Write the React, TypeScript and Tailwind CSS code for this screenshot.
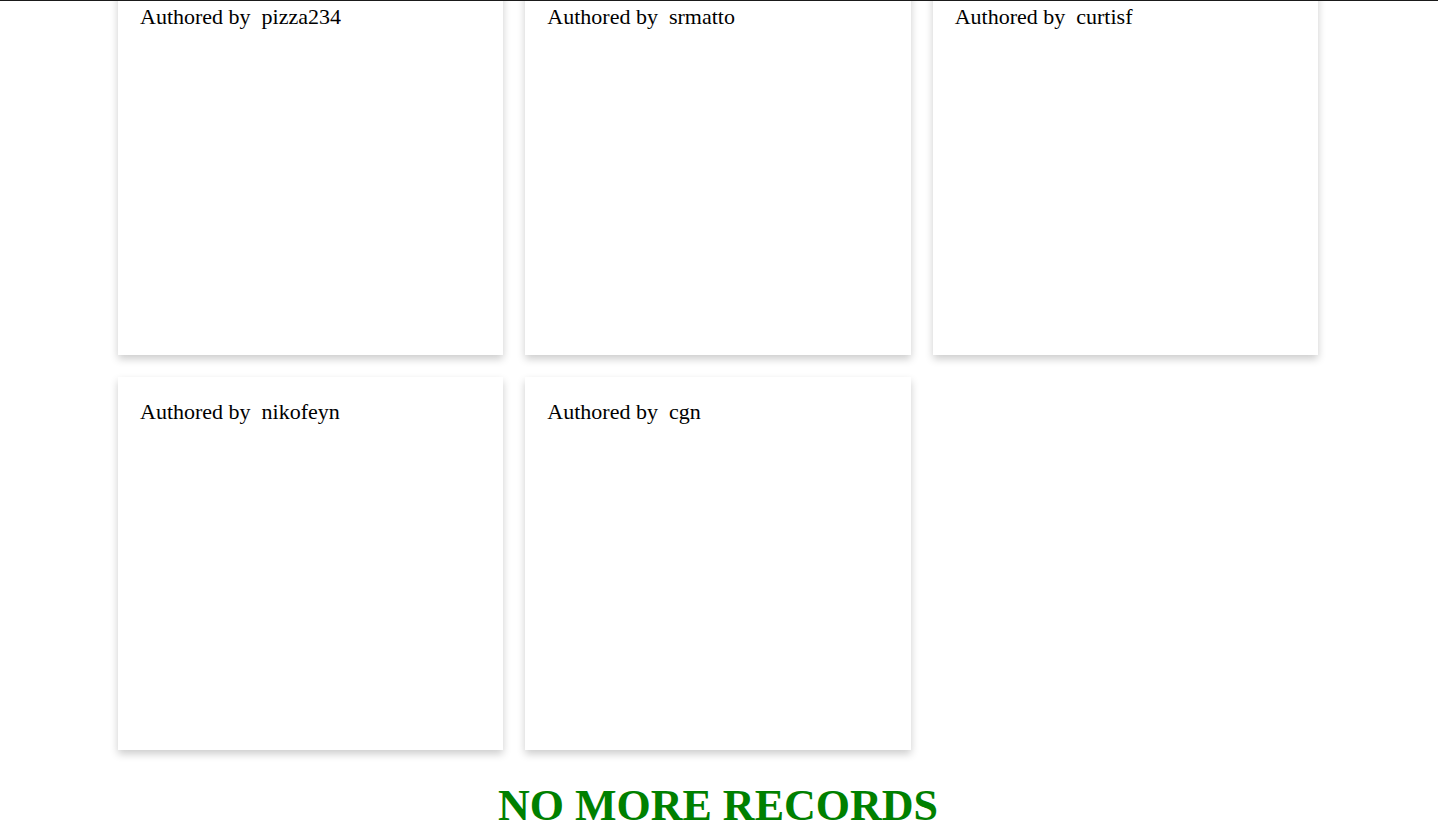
const AUTHORS = ['pizza234', 'srmatto', 'curtisf', 'nikofeyn', 'cgn']

export default function App() {
  return (
    <div className="h-[822px] overflow-hidden bg-white border-t border-[#1a1a1a]">
      <div className="-mt-[19px] w-[1200px] ml-[118px]">
        {/* Record cards */}
        <div className="grid grid-cols-3 gap-[22px]">
          {AUTHORS.map((name) => (
            <div
              key={name}
              className="h-[373px] bg-white px-[22px] pt-[22px] shadow-[0_4px_8px_0_rgba(0,0,0,0.2)]"
            >
              <p className="text-[22px] leading-[25px] text-black font-['Liberation_Serif',serif]">
                Authored by&nbsp; {name}
              </p>
            </div>
          ))}
        </div>

        {/* Footer */}
        <h1 className="mt-[31px] text-center text-[44px] leading-[50px] font-bold text-[#008000] font-['Liberation_Serif',serif]">
          NO MORE RECORDS
        </h1>
      </div>
    </div>
  )
}
